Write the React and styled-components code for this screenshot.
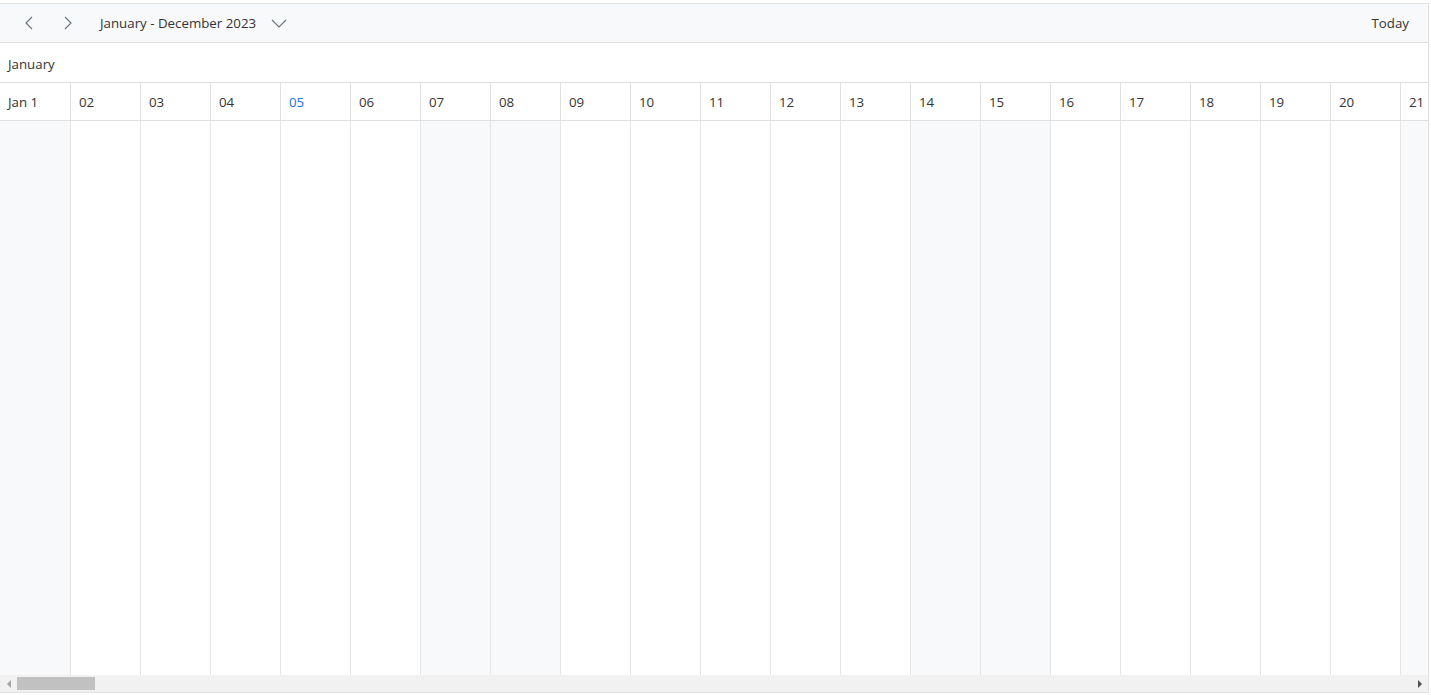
import React from "react";
import styled, { createGlobalStyle } from "styled-components";

const GlobalStyle = createGlobalStyle`
  body {
    margin: 0;
    font-family: "Open Sans", "Noto Sans", sans-serif;
    background: #fff;
  }
`;

const days = Array.from({ length: 31 }, (_, i) => {
  const day = i + 1;
  const weekday = (day - 1) % 7; // Jan 1 2023 was a Sunday
  return {
    label: day === 1 ? "Jan 1" : String(day).padStart(2, "0"),
    weekend: weekday === 0 || weekday === 6,
    today: day === 5,
  };
});

const Chevron = ({ dir }) => {
  const points = {
    left: "9,2 3,8 9,14",
    right: "3,2 9,8 3,14",
  }[dir];
  return (
    <svg width="12" height="16" viewBox="0 0 12 16">
      <polyline points={points} fill="none" stroke="#6c757d" strokeWidth="1.2" />
    </svg>
  );
};

const App = () => {
  return (
    <>
      <GlobalStyle />
      <Scheduler>
        <Toolbar>
          <NavButton>
            <Chevron dir="left" />
          </NavButton>
          <NavButton>
            <Chevron dir="right" />
          </NavButton>
          <DateRange>
            January - December 2023
            <svg width="16" height="9" viewBox="0 0 16 9">
              <polyline points="1,1 8,8 15,1" fill="none" stroke="#6c757d" strokeWidth="1.2" />
            </svg>
          </DateRange>
          <TodayButton>Today</TodayButton>
        </Toolbar>
        <Timeline>
          <MonthRow>January</MonthRow>
          <DayRow>
            {days.map((d) => (
              <DayCell key={d.label} $today={d.today}>
                {d.label}
              </DayCell>
            ))}
          </DayRow>
          <Body>
            {days.map((d) => (
              <BodyCell key={d.label} $weekend={d.weekend} />
            ))}
          </Body>
        </Timeline>
        <ScrollBar>
          <ArrowLeft />
          <Track>
            <Thumb />
          </Track>
          <ArrowRight />
        </ScrollBar>
      </Scheduler>
    </>
  );
};

const Scheduler = styled.div`
  margin-top: 3px;
  width: 1429px;
  height: 690px;
  box-sizing: border-box;
  border: 1px solid #e0e0e0;
  border-left: none;
  display: flex;
  flex-direction: column;
  overflow: hidden;
`;

const Toolbar = styled.div`
  height: 39px;
  flex-shrink: 0;
  background: #f8f9fa;
  border-bottom: 1px solid #e0e0e0;
  box-sizing: border-box;
  display: flex;
  align-items: center;
  padding: 0 19px 0 17px;
`;

const NavButton = styled.div`
  width: 24px;
  height: 28px;
  margin-right: 15px;
  display: flex;
  align-items: center;
  justify-content: center;
`;

const DateRange = styled.div`
  margin-left: 5px;
  display: flex;
  align-items: center;
  gap: 15px;
  font-size: 13.3px;
  color: #333;
  svg {
    margin-top: 1px;
  }
`;

const TodayButton = styled.div`
  margin-left: auto;
  font-size: 13.3px;
  color: #333;
`;

const Timeline = styled.div`
  flex: 1;
  display: flex;
  flex-direction: column;
  overflow: hidden;
`;

const MonthRow = styled.div`
  height: 40px;
  flex-shrink: 0;
  box-sizing: border-box;
  border-bottom: 1px solid #e0e0e0;
  display: flex;
  align-items: center;
  padding: 2px 0 0 8px;
  font-size: 13.3px;
  color: #333;
`;

const DayRow = styled.div`
  height: 38px;
  flex-shrink: 0;
  display: grid;
  grid-template-columns: repeat(31, 70px);
  box-sizing: border-box;
  border-bottom: 1px solid #e0e0e0;
`;

const DayCell = styled.div`
  box-sizing: border-box;
  border-left: 1px solid #e0e0e0;
  display: flex;
  align-items: center;
  padding-left: 8px;
  font-size: 13.3px;
  color: ${(p) => (p.$today ? "#1a73e8" : "#333")};
  &:first-child {
    border-left: none;
  }
`;

const Body = styled.div`
  flex: 1;
  display: grid;
  grid-template-columns: repeat(31, 70px);
`;

const BodyCell = styled.div`
  box-sizing: border-box;
  border-left: 1px solid #e6e6e6;
  background: ${(p) => (p.$weekend ? "#f8f9fa" : "#fff")};
  &:first-child {
    border-left: none;
  }
`;

const ScrollBar = styled.div`
  height: 17px;
  flex-shrink: 0;
  background: #f1f1f1;
  display: flex;
  align-items: center;
`;

const Track = styled.div`
  flex: 1;
  height: 100%;
  display: flex;
  align-items: center;
`;

const Thumb = styled.div`
  width: 78px;
  height: 13px;
  background: #c1c1c1;
`;

const Arrow = styled.div`
  width: 17px;
  height: 17px;
  display: flex;
  align-items: center;
  justify-content: center;
  &::before {
    content: "";
    width: 0;
    height: 0;
    border-top: 4px solid transparent;
    border-bottom: 4px solid transparent;
  }
`;

const ArrowLeft = styled(Arrow)`
  &::before {
    border-right: 4px solid #a3a3a3;
  }
`;

const ArrowRight = styled(Arrow)`
  &::before {
    border-left: 4px solid #505050;
  }
`;

export default App;
